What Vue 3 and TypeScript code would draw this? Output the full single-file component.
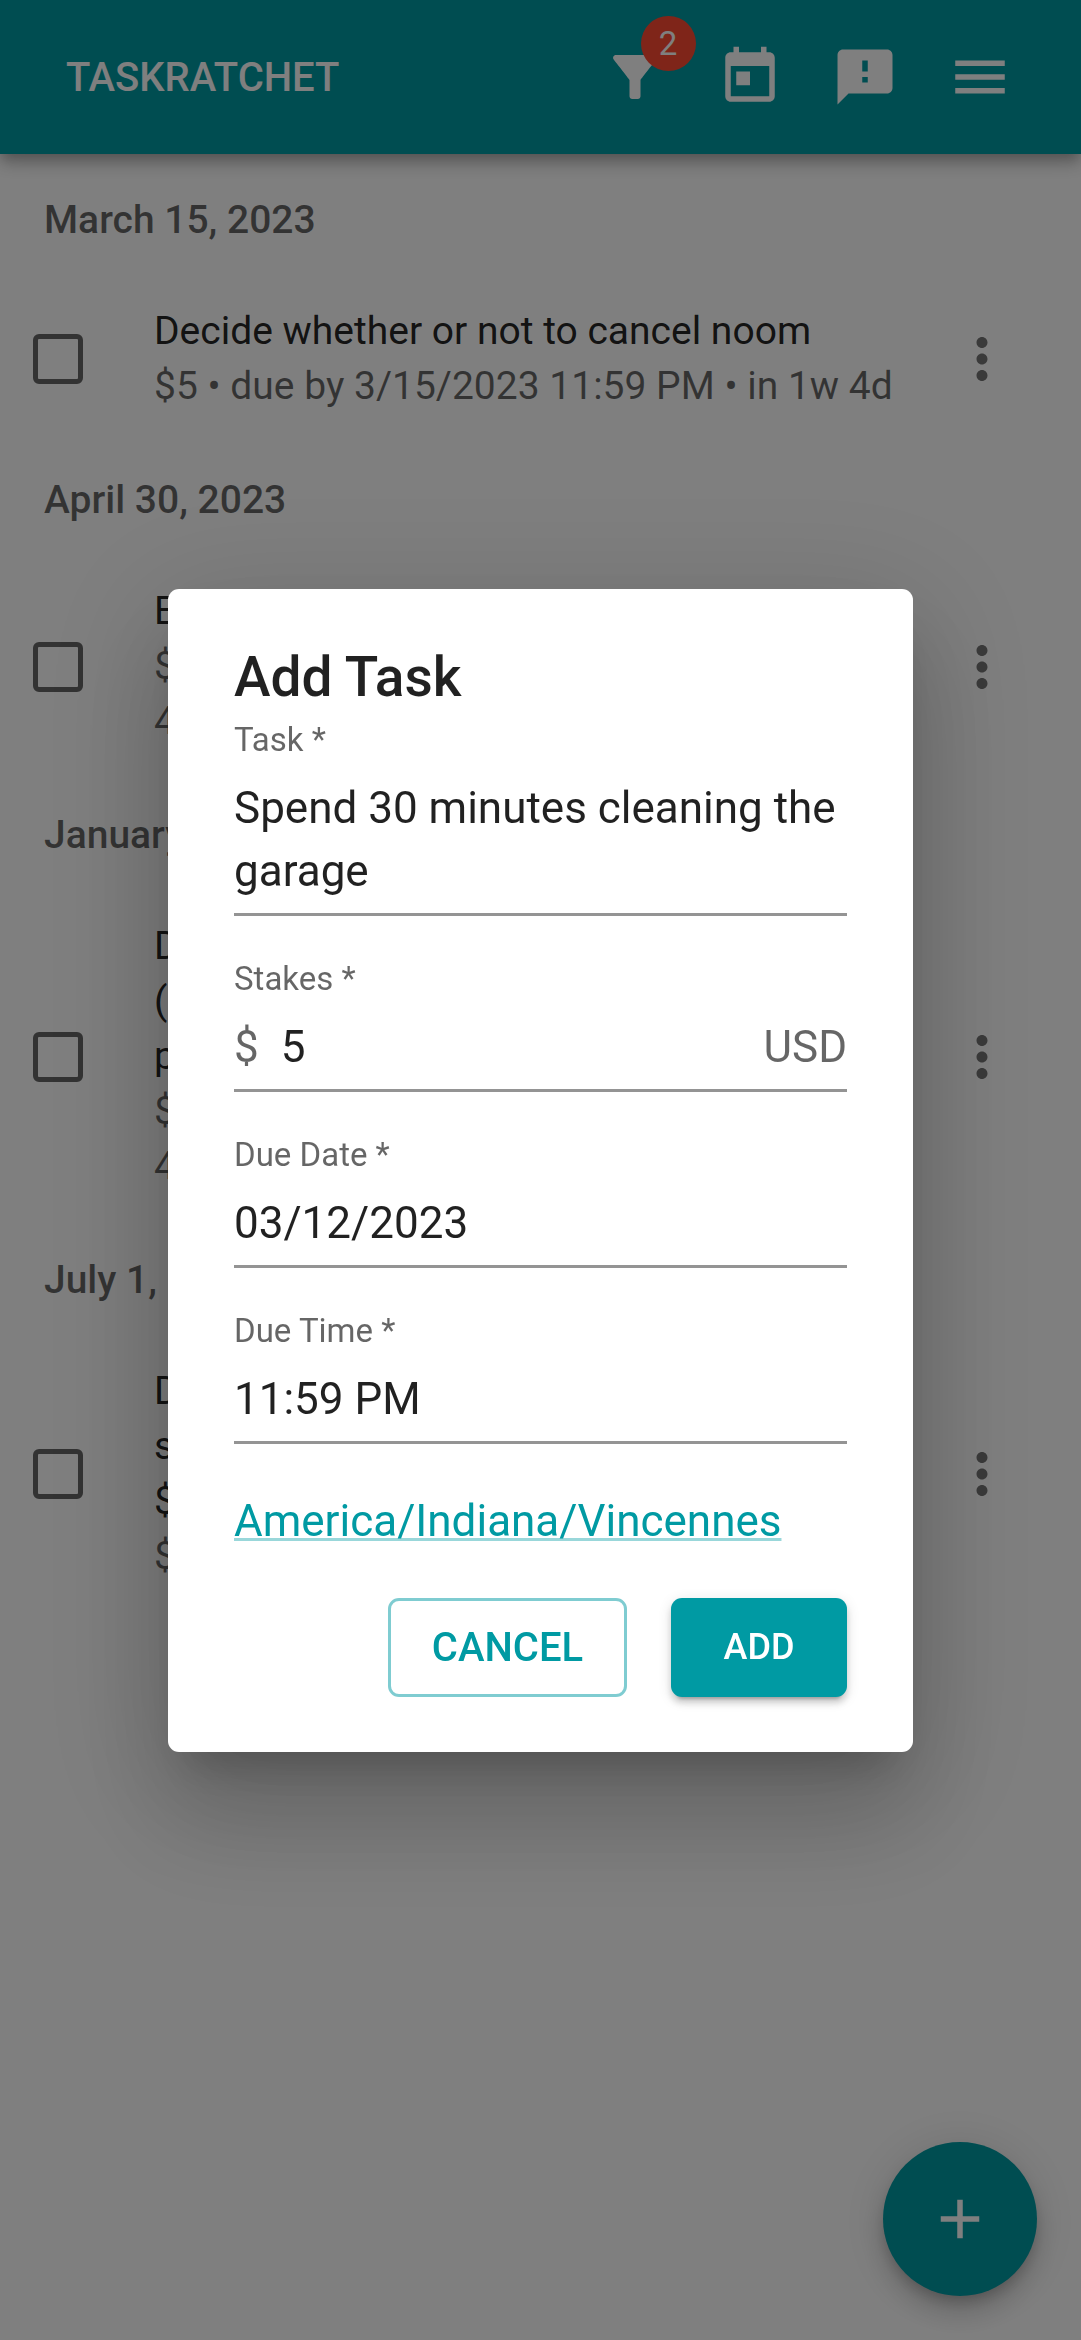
<script setup lang="ts">
import { ref } from 'vue'

interface Task {
  title: string[]
  details: string[]
}

interface Group {
  date: string
  task: Task
}

const groups: Group[] = [
  {
    date: 'March 15, 2023',
    task: {
      title: ['Decide whether or not to cancel noom'],
      details: ['$5 • due by 3/15/2023 11:59 PM • in 1w 4d'],
    },
  },
  { date: 'April 30, 2023', task: { title: ['E'], details: ['$', '4'] } },
  { date: 'January', task: { title: ['D', '(', 'p'], details: ['$', '4'] } },
  { date: 'July 1,', task: { title: ['D', 's', '$'], details: ['$'] } },
]

const filterCount = ref(2)
const task = ref('Spend 30 minutes cleaning the garage')
const stakes = ref('5')
const dueDate = ref('03/12/2023')
const dueTime = ref('11:59 PM')
</script>

<template>
  <div class="app">
    <header class="bar">
      <a class="brand" href="#">TASKRATCHET</a>
      <nav class="actions">
        <button type="button" class="icon-button" aria-label="Filters">
          <span class="badged">
            <svg viewBox="0 0 24 24" class="icon">
              <path d="M4.25 5.61C6.27 8.2 10 13 10 13v6c0 .55.45 1 1 1h2c.55 0 1-.45 1-1v-6s3.72-4.8 5.74-7.39c.51-.66.04-1.61-.79-1.61H5.04c-.83 0-1.3.95-.79 1.61z" />
            </svg>
            <span class="badge">{{ filterCount }}</span>
          </span>
        </button>
        <button type="button" class="icon-button" aria-label="Today">
          <svg viewBox="0 0 24 24" class="icon">
            <path d="M19 3h-1V1h-2v2H8V1H6v2H5c-1.11 0-1.99.9-1.99 2L3 19c0 1.1.89 2 2 2h14c1.1 0 2-.9 2-2V5c0-1.1-.9-2-2-2zm0 16H5V8h14v11zM7 10h5v5H7z" />
          </svg>
        </button>
        <button type="button" class="icon-button" aria-label="Feedback">
          <svg viewBox="0 0 24 24" class="icon">
            <path d="M20 2H4c-1.1 0-1.99.9-1.99 2L2 22l4-4h14c1.1 0 2-.9 2-2V4c0-1.1-.9-2-2-2zm-7 12h-2v-2h2v2zm0-4h-2V6h2v4z" />
          </svg>
        </button>
        <button type="button" class="icon-button" aria-label="Menu">
          <svg viewBox="0 0 24 24" class="icon">
            <path d="M3 18h18v-2H3v2zm0-5h18v-2H3v2zm0-7v2h18V6H3z" />
          </svg>
        </button>
      </nav>
    </header>

    <main>
      <section v-for="group in groups" :key="group.date">
        <h2 class="date">{{ group.date }}</h2>
        <div class="task">
          <input type="checkbox" class="check" :aria-label="group.task.title[0]" />
          <div class="task-text">
            <div v-for="(line, i) in group.task.title" :key="'t' + i">{{ line }}</div>
            <div v-for="(line, i) in group.task.details" :key="'d' + i" class="detail">{{ line }}</div>
          </div>
          <button type="button" class="more" aria-label="More">
            <svg viewBox="0 0 24 24" class="icon">
              <path d="M12 8c1.1 0 2-.9 2-2s-.9-2-2-2-2 .9-2 2 .9 2 2 2zm0 2c-1.1 0-2 .9-2 2s.9 2 2 2 2-.9 2-2-.9-2-2-2zm0 6c-1.1 0-2 .9-2 2s.9 2 2 2 2-.9 2-2-.9-2-2-2z" />
            </svg>
          </button>
        </div>
      </section>
    </main>

    <button type="button" class="fab" aria-label="Add">
      <svg viewBox="0 0 24 24" class="icon">
        <path d="M19 13h-6v6h-2v-6H5v-2h6V5h2v6h6v2z" />
      </svg>
    </button>

    <div class="backdrop">
      <form class="dialog" role="dialog" aria-labelledby="dialog-title" @submit.prevent>
        <h1 id="dialog-title" class="title">Add Task</h1>
        <div class="fields">
          <div class="field">
            <label for="task">Task *</label>
            <div class="control">
              <textarea id="task" v-model="task" rows="2"></textarea>
            </div>
          </div>
          <div class="field">
            <label for="stakes">Stakes *</label>
            <div class="control">
              <span class="unit">$</span>
              <input id="stakes" v-model="stakes" type="text" inputmode="numeric" />
              <span class="unit">USD</span>
            </div>
          </div>
          <div class="field">
            <label for="due-date">Due Date *</label>
            <div class="control">
              <input id="due-date" v-model="dueDate" type="text" />
            </div>
          </div>
          <div class="field">
            <label for="due-time">Due Time *</label>
            <div class="control">
              <input id="due-time" v-model="dueTime" type="text" />
            </div>
          </div>
          <div class="zone"><a href="#">America/Indiana/Vincennes</a></div>
          <div class="buttons">
            <button type="button" class="button cancel">CANCEL</button>
            <button type="submit" class="button add">ADD</button>
          </div>
        </div>
      </form>
    </div>
  </div>
</template>

<style>
body {
  margin: 0;
  background: #fff;
}
</style>

<style scoped>
.app {
  --teal: #009aa3;
  --ink: rgba(0, 0, 0, 0.87);
  --muted: rgba(0, 0, 0, 0.6);
  min-height: 100vh;
  font-family: Roboto, "Liberation Sans", sans-serif;
  font-size: 39px;
  line-height: 55px;
  color: var(--ink);
}

*,
*::before {
  box-sizing: border-box;
}

button,
input,
textarea {
  margin: 0;
  padding: 0;
  border: 0;
  background: none;
  color: inherit;
  font: inherit;
  outline: none;
}

.icon {
  display: block;
  width: 66px;
  height: 66px;
  fill: currentColor;
}

.bar {
  position: relative;
  display: flex;
  align-items: center;
  justify-content: space-between;
  height: 154px;
  padding: 0 44px 0 66px;
  background: var(--teal);
  color: #fff;
  box-shadow:
    0 6px 11px -3px rgba(0, 0, 0, 0.2),
    0 11px 14px rgba(0, 0, 0, 0.14),
    0 3px 28px rgba(0, 0, 0, 0.12);
}

.brand {
  color: inherit;
  font-size: 40px;
  font-weight: 500;
  text-decoration: none;
}

.actions {
  display: flex;
}

.icon-button {
  display: flex;
  align-items: center;
  justify-content: center;
  width: 115px;
  height: 110px;
}

.badged {
  position: relative;
}

.badge {
  position: absolute;
  top: -28px;
  right: -28px;
  width: 55px;
  height: 55px;
  border-radius: 50%;
  background: #ff4a32;
  font-size: 33px;
  font-weight: 400;
  line-height: 55px;
  text-align: center;
}

.date {
  margin: 0;
  padding: 0 44px;
  color: var(--muted);
  font-size: 39px;
  font-weight: 500;
  line-height: 132px;
}

.task {
  display: flex;
  align-items: center;
  padding: 18px 44px 20px 33px;
}

.check {
  flex: none;
  width: 50px;
  height: 50px;
  margin-right: 71px;
  border: 5px solid var(--muted);
  border-radius: 6px;
  appearance: none;
}

.task-text {
  flex: 1;
  min-width: 0;
}

.detail {
  color: var(--muted);
}

.more {
  flex: none;
  width: 110px;
  padding: 0 22px;
  color: rgba(0, 0, 0, 0.54);
}

.fab {
  position: fixed;
  right: 44px;
  bottom: 44px;
  display: flex;
  align-items: center;
  justify-content: center;
  width: 154px;
  height: 154px;
  border-radius: 50%;
  background: var(--teal);
  color: #fff;
  box-shadow:
    0 8px 14px -3px rgba(0, 0, 0, 0.2),
    0 17px 28px rgba(0, 0, 0, 0.14),
    0 3px 50px rgba(0, 0, 0, 0.12);
}

.backdrop {
  position: fixed;
  inset: 0;
  display: flex;
  align-items: center;
  padding: 0 168px;
  background: rgba(0, 0, 0, 0.5);
}

.dialog {
  flex: 1;
  min-width: 0;
  padding: 44px 66px 55px;
  border-radius: 11px;
  background: #fff;
  box-shadow:
    0 30px 41px -19px rgba(0, 0, 0, 0.2),
    0 66px 105px 8px rgba(0, 0, 0, 0.14),
    0 25px 127px 22px rgba(0, 0, 0, 0.12);
}

.title {
  margin: 0;
  font-size: 55px;
  font-weight: 500;
  line-height: 88px;
}

.fields {
  display: flex;
  flex-direction: column;
  gap: 44px;
}

.field label {
  display: block;
  color: var(--muted);
  font-size: 33px;
  line-height: 38px;
}

.control {
  display: flex;
  gap: 22px;
  padding: 18px 0 10px;
  border-bottom: 3px solid #949494;
  font-size: 44px;
  line-height: 63px;
}

.control input {
  flex: 1;
  min-width: 0;
  height: 63px;
}

.control textarea {
  display: block;
  width: 100%;
  height: 126px;
  resize: none;
  overflow: hidden;
}

.unit {
  color: var(--muted);
}

.zone {
  font-size: 44px;
  line-height: 66px;
}

.zone a {
  color: var(--teal);
  text-decoration: underline 3px rgba(0, 154, 163, 0.4);
  text-decoration-skip-ink: none;
  text-underline-offset: 2px;
}

.buttons {
  display: flex;
  justify-content: flex-end;
  gap: 44px;
}

.button {
  height: 99px;
  border-radius: 11px;
  font-weight: 500;
}

.cancel {
  min-width: 239px;
  border: 3px solid rgba(0, 154, 163, 0.5);
  color: var(--teal);
  font-size: 40px;
}

.add {
  min-width: 176px;
  background: var(--teal);
  color: #fff;
  font-size: 36px;
  box-shadow:
    0 8px 3px -6px rgba(0, 0, 0, 0.2),
    0 6px 6px rgba(0, 0, 0, 0.14),
    0 3px 14px rgba(0, 0, 0, 0.12);
}
</style>
